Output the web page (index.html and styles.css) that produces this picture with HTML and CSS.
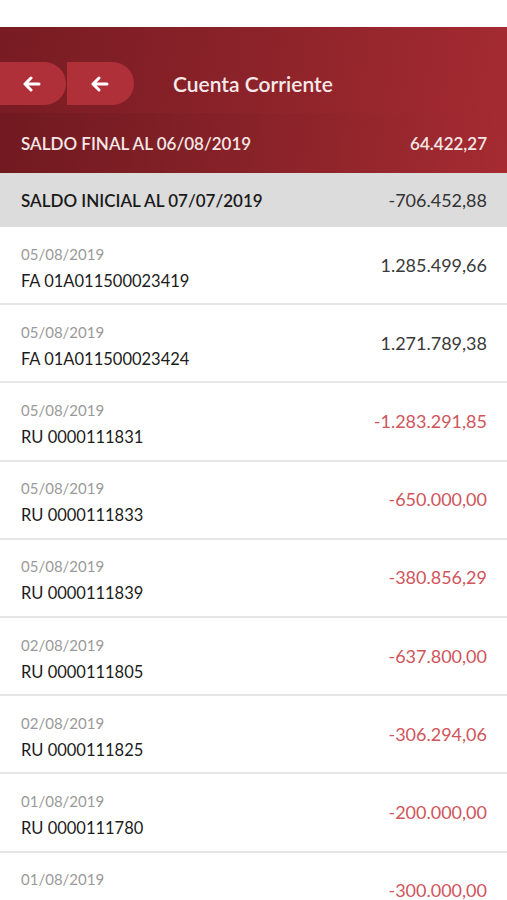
FILE: index.html
```html
<html>
<head>
  <title>Cuenta Corriente</title>
  <link rel="stylesheet" href="styles.css">
</head>
<body>
  <div class="top"></div>
  <div class="header">
    <div class="nav">
      <div class="back first">
        <svg width="18" height="16" viewBox="0 0 18 16"><path d="M8 2 L2 8 L8 14 M2 8 H16" stroke="#fff" stroke-width="3" fill="none" stroke-linecap="round" stroke-linejoin="round"/></svg>
      </div>
      <div class="back second">
        <svg width="18" height="16" viewBox="0 0 18 16"><path d="M8 2 L2 8 L8 14 M2 8 H16" stroke="#fff" stroke-width="3" fill="none" stroke-linecap="round" stroke-linejoin="round"/></svg>
      </div>
      <div class="title">Cuenta Corriente</div>
    </div>
    <div class="final">
      <span>SALDO FINAL AL 06/08/2019</span>
      <span>64.422,27</span>
    </div>
  </div>
  <div class="inicial">
    <span>SALDO INICIAL AL 07/07/2019</span>
    <span class="num">-706.452,88</span>
  </div>
  <div class="list">
    <div class="row">
      <div class="info"><div class="date">05/08/2019</div><div class="name">FA 01A011500023419</div></div>
      <div class="amount">1.285.499,66</div>
    </div>
    <div class="row">
      <div class="info"><div class="date">05/08/2019</div><div class="name">FA 01A011500023424</div></div>
      <div class="amount">1.271.789,38</div>
    </div>
    <div class="row">
      <div class="info"><div class="date">05/08/2019</div><div class="name">RU 0000111831</div></div>
      <div class="amount neg">-1.283.291,85</div>
    </div>
    <div class="row">
      <div class="info"><div class="date">05/08/2019</div><div class="name">RU 0000111833</div></div>
      <div class="amount neg">-650.000,00</div>
    </div>
    <div class="row">
      <div class="info"><div class="date">05/08/2019</div><div class="name">RU 0000111839</div></div>
      <div class="amount neg">-380.856,29</div>
    </div>
    <div class="row">
      <div class="info"><div class="date">02/08/2019</div><div class="name">RU 0000111805</div></div>
      <div class="amount neg">-637.800,00</div>
    </div>
    <div class="row">
      <div class="info"><div class="date">02/08/2019</div><div class="name">RU 0000111825</div></div>
      <div class="amount neg">-306.294,06</div>
    </div>
    <div class="row">
      <div class="info"><div class="date">01/08/2019</div><div class="name">RU 0000111780</div></div>
      <div class="amount neg">-200.000,00</div>
    </div>
    <div class="row">
      <div class="info"><div class="date">01/08/2019</div><div class="name">&nbsp;</div></div>
      <div class="amount neg">-300.000,00</div>
    </div>
  </div>
</body>
</html>
```

FILE: styles.css
```css
body {
  margin: 0;
  font-family: Lato, "Liberation Sans", sans-serif;
  background: #fff;
  overflow: hidden;
}
.top {
  height: 27px;
  background: #fff;
}
.header {
  background: linear-gradient(100deg, #781b22 0%, #8a2229 45%, #a52b31 100%);
  color: #fff;
}
.nav {
  height: 86px;
  display: flex;
  align-items: flex-start;
  padding-top: 35px;
  box-sizing: border-box;
}
.back {
  height: 43px;
  background: #b0303a;
  border-radius: 0 22px 22px 0;
  display: flex;
  align-items: center;
}
.back.first {
  width: 66px;
  padding-left: 23px;
  box-sizing: border-box;
}
.back.second {
  width: 67px;
  margin-left: 1px;
  padding-left: 24px;
  box-sizing: border-box;
}
.title {
  margin-left: 39px;
  line-height: 43px;
  font-size: 21px;
  font-weight: 600;
  color: #f6e9e9;
}
.final {
  height: 60px;
  display: flex;
  align-items: center;
  justify-content: space-between;
  padding: 0 20px 0 21px;
  font-size: 17px;
  font-weight: 600;
  color: #f5e6e6;
  background: linear-gradient(100deg, rgba(0,0,0,0.07), rgba(0,0,0,0));
}
.inicial {
  height: 54px;
  display: flex;
  align-items: center;
  justify-content: space-between;
  padding: 0 20px 0 21px;
  background: #dcdcdc;
  font-size: 17px;
  font-weight: 600;
  color: #1a1a1a;
}
.inicial .num {
  font-weight: 400;
  font-size: 18px;
  color: #333;
}
.row {
  height: 76.2px;
  border-bottom: 2px solid #e6e6e6;
  display: flex;
  align-items: center;
  justify-content: space-between;
  padding: 0 20px 0 21px;
}
.info {
  padding-top: 7px;
}
.date {
  font-size: 15px;
  color: #9a9a9a;
  line-height: 20px;
}
.name {
  font-size: 16.5px;
  color: #1c1c1c;
  line-height: 26px;
  margin-top: 4px;
}
.amount {
  font-size: 18px;
  color: #3a3a3a;
  margin-bottom: 1px;
}
.amount.neg {
  color: #d0555c;
}
```
